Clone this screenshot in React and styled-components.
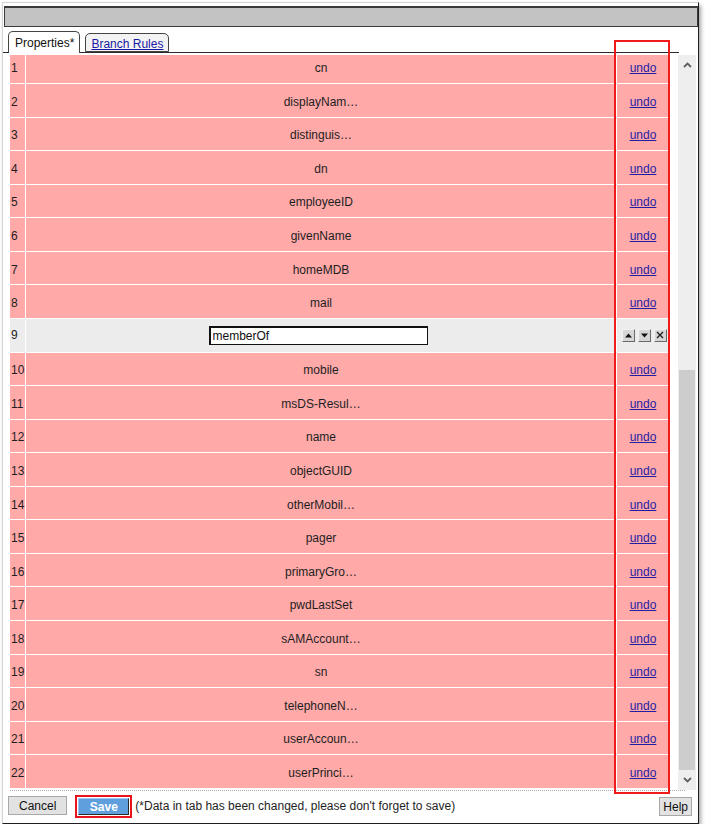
import React from 'react'
import styled, {createGlobalStyle} from 'styled-components'

const GlobalStyle = createGlobalStyle`
  html, body {
    margin: 0;
    background: #ffffff;
  }
  body {
    font-family: "Liberation Sans", Arial, sans-serif;
    font-size: 12px;
    color: #1e1e1e;
  }
  * { box-sizing: border-box; }
`

const fields = [
  'cn', 'displayNam…', 'distinguis…', 'dn', 'employeeID', 'givenName',
  'homeMDB', 'mail', 'memberOf', 'mobile', 'msDS-Resul…', 'name',
  'objectGUID', 'otherMobil…', 'pager', 'primaryGro…', 'pwdLastSet',
  'sAMAccount…', 'sn', 'telephoneN…', 'userAccoun…', 'userPrinci…',
]

const EDITING = 8

const Dialog = styled.div`
  position: relative;
  margin: 2px 0 0 2px;
  width: 697px;
  height: 822px;
  border: 1px solid;
  border-color: #d4d4d4 #1f1f1f #1f1f1f #d4d4d4;
  box-shadow: 2px 3px 4px rgba(0, 0, 0, 0.35);
  display: flex;
  flex-direction: column;
  background: #fff;
`

const TitleBar = styled.div`
  margin: 3px 0 0 1px;
  height: 21px;
  background: #c3c3c3;
  border: 1px solid #3c3c3c;
  border-top-width: 2px;
`

const TabStrip = styled.div`
  margin: 4px 19px 0 0;
  padding-left: 5px;
  height: 22px;
  display: flex;
  align-items: flex-end;
  gap: 5px;
  border-bottom: 1px solid #2b2b2b;
`

const Tab = styled.div`
  height: ${p => (p.$active ? '22px' : '19px')};
  margin-bottom: ${p => (p.$active ? '-1px' : '0')};
  padding: ${p => (p.$active ? '4px 5px 0 6px' : '3px 5px 0 5px')};
  border: 1px solid #444;
  border-bottom: ${p => (p.$active ? 'none' : '1px solid #444')};
  border-radius: 5px 5px 0 0;
  background: ${p => (p.$active ? '#fff' : '#f3f3f3')};
  color: ${p => (p.$active ? '#111' : '#1a1aa6')};
  text-decoration: ${p => (p.$active ? 'none' : 'underline')};
  font-size: 12px;
  white-space: nowrap;
`

const Body = styled.div`
  margin-top: 2px;
  height: 735px;
  padding-left: 7px;
  display: flex;
`

const Viewport = styled.div`
  width: 659px;
  height: 734px;
  overflow: hidden;
`

const Grid = styled.div`
  margin-top: -4.57px;
  display: grid;
  grid-template-columns: 15px 590px 52px;
  grid-auto-rows: 32.57px;
  gap: 1px;
  background: #fff;
`

const Cell = styled.div`
  display: flex;
  align-items: center;
  justify-content: ${p => p.$align || 'center'};
  padding-left: ${p => (p.$align === 'flex-start' ? '1px' : '0')};
  padding-top: ${p => (p.$editing ? '0' : '3px')};
  background: ${p => (p.$editing ? '#ececec' : '#ffa9a9')};
  color: #1e1e1e;
  white-space: nowrap;
  overflow: hidden;
`

const Undo = styled.a`
  color: #1f1fa3;
  text-decoration: underline;
  cursor: pointer;
`

const NameInput = styled.input`
  width: 219px;
  height: 19px;
  margin-right: 6px;
  padding: 0 2px;
  border: 1px solid #111;
  border-top-width: 2px;
  border-left-width: 2px;
  font-family: "Liberation Sans", Arial, sans-serif;
  font-size: 12px;
  color: #111;
  background: #fff;
  outline: none;
`

const MiniButtons = styled.div`
  display: flex;
  gap: 3px;
  margin-left: 2px;
`

const MiniButton = styled.div`
  width: 13px;
  height: 13px;
  display: flex;
  align-items: center;
  justify-content: center;
  background: #d6d6d6;
  border: 1px solid;
  border-color: #f2f2f2 #6a6a6a #6a6a6a #f2f2f2;
`

const ScrollTrack = styled.div`
  margin-left: 9px;
  width: 18px;
  height: 735px;
  background: #eeeeee;
  display: flex;
  flex-direction: column;
`

const ScrollArrow = styled.div`
  height: 24px;
  display: flex;
  align-items: center;
  justify-content: center;
`

const ScrollSpace = styled.div`
  flex: 1;
  display: flex;
  flex-direction: column;
  padding: 0 1px;
`

const Thumb = styled.div`
  margin-top: ${p => p.$top}px;
  height: ${p => p.$height}px;
  background: #cdcdcd;
`

const Footer = styled.div`
  margin: 0 0 0 5px;
  flex: 1;
  display: flex;
  align-items: flex-start;
  padding-top: 6px;
  position: relative;
`

const Dotted = styled.div`
  position: absolute;
  top: 0;
  left: 2px;
  width: 675px;
  border-top: 1px dotted #b0b0b0;
`

const GreyButton = styled.button`
  height: 19px;
  padding: 0 ${p => p.$pad || 8}px;
  margin-top: ${p => p.$top || 0}px;
  font-family: "Liberation Sans", Arial, sans-serif;
  font-size: 12px;
  color: #111;
  background: #e2e2e2;
  border: 1px solid #a8a8a8;
  border-radius: 0;
  cursor: pointer;
`

const SaveButton = styled.button`
  width: 51px;
  height: 17px;
  margin: 2px 6px 0 11px;
  padding: 0;
  font-family: "Liberation Sans", Arial, sans-serif;
  font-size: 12px;
  font-weight: bold;
  color: #fff;
  background: #5f9fdd;
  border: 1px solid;
  border-color: #9cc6ee #2a2a2a #2a2a2a #9cc6ee;
  outline: 2px solid #e8141b;
  outline-offset: 1px;
  cursor: pointer;
`

const Note = styled.span`
  margin-top: 3px;
  font-size: 12px;
  color: #1e1e1e;
  white-space: nowrap;
`

const HelpWrap = styled.div`
  margin-left: auto;
  margin-right: 6px;
`

const Highlight = styled.div`
  position: absolute;
  left: 611px;
  top: 37px;
  width: 56px;
  height: 754px;
  border: 2px solid #f01a1a;
  pointer-events: none;
`

const Chevron = ({up}) => (
  <svg width="9" height="6" viewBox="0 0 9 6">
    <path
      d={up ? 'M1 5 L4.5 1.5 L8 5' : 'M1 1 L4.5 4.5 L8 1'}
      fill="none"
      stroke="#606060"
      strokeWidth="1.8"
    />
  </svg>
)

const Tri = ({dir}) => (
  <svg width="7" height="5" viewBox="0 0 7 5">
    <path d={dir === 'up' ? 'M0 4.5 L3.5 0.5 L7 4.5Z' : 'M0 0.5 L7 0.5 L3.5 4.5Z'} fill="#111" />
  </svg>
)

const Cross = () => (
  <svg width="8" height="8" viewBox="0 0 8 8">
    <path d="M1 1 L7 7 M7 1 L1 7" stroke="#222" strokeWidth="1.4" />
  </svg>
)

const Row = ({index, name}) => {
  const editing = index === EDITING
  return (
    <>
      <Cell $align="flex-start" $editing={editing}>{index + 1}</Cell>
      <Cell $editing={editing}>
        {editing ? <NameInput defaultValue={name} /> : name}
      </Cell>
      <Cell $editing={editing}>
        {editing ? (
          <MiniButtons>
            <MiniButton><Tri dir="up" /></MiniButton>
            <MiniButton><Tri dir="down" /></MiniButton>
            <MiniButton><Cross /></MiniButton>
          </MiniButtons>
        ) : (
          <Undo>undo</Undo>
        )}
      </Cell>
    </>
  )
}

export default function App() {
  return (
    <>
      <GlobalStyle />
      <Dialog>
        <TitleBar />
        <TabStrip>
          <Tab $active>Properties*</Tab>
          <Tab>Branch Rules</Tab>
        </TabStrip>
        <Body>
          <Viewport>
            <Grid>
              {fields.map((name, i) => (
                <Row key={name} index={i} name={name} />
              ))}
            </Grid>
          </Viewport>
          <ScrollTrack>
            <ScrollArrow><Chevron up /></ScrollArrow>
            <ScrollSpace>
              <Thumb $top={294} $height={400} />
            </ScrollSpace>
            <ScrollArrow><Chevron /></ScrollArrow>
          </ScrollTrack>
        </Body>
        <Footer>
          <Dotted />
          <GreyButton $pad={10}>Cancel</GreyButton>
          <SaveButton>Save</SaveButton>
          <Note>(*Data in tab has been changed, please don't forget to save)</Note>
          <HelpWrap>
            <GreyButton $pad={3} $top={1}>Help</GreyButton>
          </HelpWrap>
        </Footer>
        <Highlight />
      </Dialog>
    </>
  )
}
